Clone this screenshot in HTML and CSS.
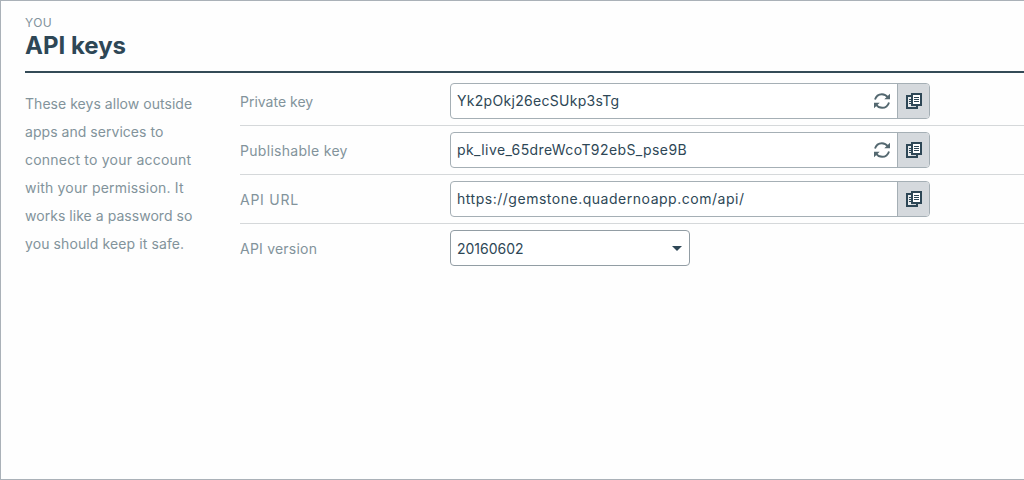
FILE: index.html
```html
<!DOCTYPE html>
<html lang="en">
<head>
<meta charset="utf-8">
<title>API keys</title>
<link rel="stylesheet" href="styles.css">
</head>
<body>
<svg width="0" height="0" class="sprite">
  <symbol id="refresh" viewBox="0 0 18 18">
    <path d="M2 7.6C3 4.200 5.600 2.200 8.900 2.200c2.500 0 4.500 1.100 5.900 3.100M16 10.400c-1 3.400-3.600 5.400-6.900 5.400-2.500 0-4.500-1.100-5.900-3.100" fill="none" stroke="#546870" stroke-width="1.900"/>
    <path d="M17 1.700v5.500h-5.700zM1 16.300v-5.500h5.700z" fill="#546870"/>
  </symbol>
  <symbol id="copy" viewBox="0 0 16 16">
    <path d="M5 3H1v12h10v-2" fill="none" stroke="#2e4756" stroke-width="2"/>
    <path d="M2 4h3v10H2z" fill="#e8ebed"/>
    <path d="M3 6.500h2M3 8.500h2M3 10.500h2" stroke="#2e4756"/>
    <path d="M6 1h9v11H6z" fill="#fff" stroke="#2e4756" stroke-width="2"/>
    <path d="M8 4.500h5M8 6.500h5M8 8.500h5" stroke="#2e4756"/>
  </symbol>
</svg>
<div class="page">
  <header class="header">
    <div class="eyebrow">YOU</div>
    <h1 class="title">API keys</h1>
  </header>
  <main class="content">
    <p class="intro">
      <span class="l1">These keys allow outside</span>
      <span class="l2">apps and services to</span>
      <span class="l3">connect to your account</span>
      <span class="l4">with your permission. It</span>
      <span class="l5">works like a password so</span>
      <span class="l6">you should keep it safe.</span>
    </p>
    <div class="fields">
      <div class="row">
        <div class="label private">Private key</div>
        <div class="field">
          <span class="value v1">Yk2pOkj26ecSUkp3sTg</span>
          <svg class="refresh"><use href="#refresh"/></svg>
          <span class="copy"><svg><use href="#copy"/></svg></span>
        </div>
      </div>
      <div class="row">
        <div class="label public">Publishable key</div>
        <div class="field">
          <span class="value v2">pk_live_65dreWcoT92ebS_pse9B</span>
          <svg class="refresh"><use href="#refresh"/></svg>
          <span class="copy"><svg><use href="#copy"/></svg></span>
        </div>
      </div>
      <div class="row">
        <div class="label url">API URL</div>
        <div class="field">
          <span class="value v3">https://gemstone.quadernoapp.com/api/</span>
          <span class="copy"><svg><use href="#copy"/></svg></span>
        </div>
      </div>
      <div class="row">
        <div class="label version">API version</div>
        <div class="field select">
          <span class="value v4">20160602</span>
          <span class="caret"></span>
        </div>
      </div>
    </div>
  </main>
</div>
</body>
</html>
```
FILE: styles.css
```css
* { box-sizing: border-box; }
body {
  margin: 0;
  background: #fefefe;
  font-family: Inter, "Liberation Sans", sans-serif;
  font-size: 14px;
  color: #2e4756;
}
.sprite { display: none; }
.page {
  height: 480px;
  border: 1px solid #aab1b8;
  border-right: 0;
  padding-left: 24px;
  overflow: hidden;
}
.header {
  height: 72px;
  padding-top: 14px;
  border-bottom: 2px solid #344b57;
}
.eyebrow {
  font-size: 12px;
  line-height: 16px;
  letter-spacing: 0.4px;
  color: #81929b;
}
.title {
  margin: 0;
  font-size: 24px;
  line-height: 29px;
  font-weight: 700;
  letter-spacing: 0;
}
.content { display: flex; padding-top: 4px; }
.intro {
  width: 215px;
  margin: 0;
  padding-top: 13px;
  line-height: 28px;
  color: #82939b;
}
.intro span { display: block; white-space: nowrap; }
.l1, .l2, .l5 { letter-spacing: 0.04px; }
.l3 { letter-spacing: 0.22px; }
.l4 { letter-spacing: 0.18px; }
.l6 { letter-spacing: 0.1px; }
.fields { flex: 1; }
.row {
  display: flex;
  align-items: center;
  height: 49px;
  border-bottom: 1px solid #d5d8da;
}
.row:last-child { border-bottom-color: transparent; }
.label { width: 210px; padding-top: 1px; color: #82939b; white-space: nowrap; }
.public { letter-spacing: 0.3px; }
.url { letter-spacing: 0.75px; }
.version { letter-spacing: 0.22px; }
.field {
  display: flex;
  align-items: center;
  width: 480px;
  height: 36px;
  padding-left: 6px;
  border: 1px solid #a5afb5;
  border-radius: 4px;
  background: #fff;
  overflow: hidden;
}
.value { flex: 1; padding-bottom: 1px; white-space: nowrap; }
.v1 { letter-spacing: 0.3px; }
.v2 { letter-spacing: 0.4px; }
.v3 { letter-spacing: 0.52px; }
.v4 { padding-bottom: 0; }
.refresh { width: 18px; height: 18px; margin-right: 6px; }
.copy {
  display: flex;
  align-items: center;
  justify-content: center;
  width: 32px;
  height: 100%;
  border-left: 1px solid #a5afb5;
  background: #d5d9dd;
}
.copy svg { width: 16px; height: 16px; }
.select { width: 240px; padding-right: 7px; border-color: #929da4; }
.caret {
  border: 5px solid transparent;
  border-top-color: #2e4756;
  border-bottom: 0;
}
```
